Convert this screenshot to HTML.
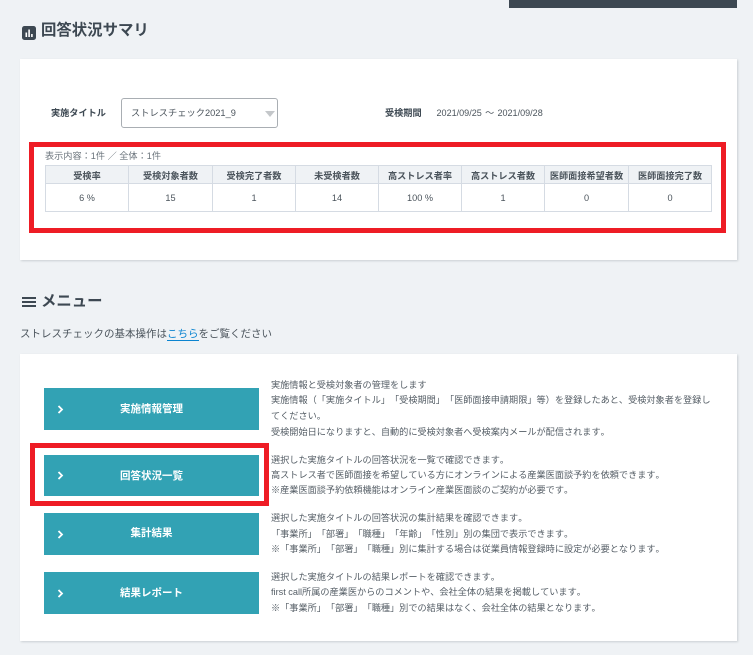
<!DOCTYPE html>
<html lang="ja">
<head>
<meta charset="utf-8">
<title>回答状況サマリ</title>
<style>
html,body{margin:0;padding:0;}
body{width:753px;height:655px;overflow:hidden;position:relative;background:#eff2f5;color:#3d4852;font-family:"Liberation Sans","Noto Sans CJK JP",sans-serif;text-spacing-trim:space-all;font-kerning:none;}
.a{position:absolute;white-space:nowrap;}
.panel{position:absolute;left:20px;width:717px;background:#fff;box-shadow:1px 1px 2px rgba(60,70,80,.2);}
.h{font-size:15.4px;font-weight:700;line-height:20px;color:#3d4852;}
.red{position:absolute;border:5px solid #ee1c25;box-sizing:border-box;}
.tbl{position:absolute;left:45px;top:165px;width:666px;height:47px;border-collapse:collapse;table-layout:fixed;font-size:9.17px;color:#4b545c;}
.tbl th,.tbl td{border:1px solid #d5dbe3;padding:0;text-align:center;font-weight:400;}
.tbl th{background:#eff2f5;font-weight:700;height:17px;color:#4b545c;}
.btn{position:absolute;left:44px;width:215px;background:#32a2b4;color:#fff;font-size:10.5px;font-weight:700;text-align:center;}
.btn svg{position:absolute;left:13px;top:50%;margin-top:-4.5px;}
.d{position:absolute;left:271px;font-size:9.17px;line-height:15px;height:15px;white-space:nowrap;color:#555e66;filter:blur(.25px);}
</style>
</head>
<body>
<div class="a" style="left:509px;top:0;width:228px;height:8px;background:#3d4852;"></div>

<svg class="a" style="left:22px;top:25.500px;" width="14" height="14" viewBox="0 0 14 14"><rect width="14" height="14" rx="2.500" fill="#3d4852"/><path d="M3.500 6.500h1.600v4.500H3.500zM6.300 3.500h1.600v7.500H6.300zM9.100 8h1.600v3H9.100z" fill="#fff"/></svg>
<div class="a h" style="left:41px;top:21px;">回答状況サマリ</div>

<div class="panel" style="top:59px;height:201px;"></div>
<div class="a" style="left:51px;top:106px;font-size:9.17px;font-weight:700;line-height:14px;">実施タイトル</div>
<div class="a" style="left:121px;top:98px;width:157px;height:30px;box-sizing:border-box;border:1px solid #a9aeb3;border-radius:3px;background:#fff;font-size:9.250px;line-height:28px;padding-left:9px;color:#4b545c;">ストレスチェック2021_9</div>
<div class="a" style="left:265px;top:111px;width:0;height:0;border-left:5px solid transparent;border-right:5px solid transparent;border-top:6px solid #c4c7ca;"></div>
<div class="a" style="left:385px;top:106px;font-size:9.17px;font-weight:700;line-height:14px;">受検期間</div>
<div class="a" style="left:436.500px;top:106px;font-size:9.05px;line-height:14px;color:#4b545c;word-spacing:.8px;">2021/09/25 ～ 2021/09/28</div>

<div class="a" style="left:45px;top:149px;font-size:9.17px;line-height:14px;color:#6b747c;">表示内容：1件 ／ 全体：1件</div>
<table class="tbl">
<colgroup><col style="width:83px"><col style="width:84px"><col style="width:83px"><col style="width:83px"><col style="width:83px"><col style="width:83px"><col style="width:84px"><col style="width:83px"></colgroup>
<tr><th>受検率</th><th>受検対象者数</th><th>受検完了者数</th><th>未受検者数</th><th>高ストレス者率</th><th>高ストレス者数</th><th>医師面接希望者数</th><th>医師面接完了数</th></tr>
<tr><td>6 %</td><td>15</td><td>1</td><td>14</td><td>100 %</td><td>1</td><td>0</td><td>0</td></tr>
</table>
<div class="red" style="left:29px;top:142px;width:697px;height:91px;"></div>

<svg class="a" style="left:22px;top:296px;" width="14" height="12" viewBox="0 0 14 12"><path d="M0 2h14M0 6h14M0 10h14" stroke="#3d4852" stroke-width="2" fill="none"/></svg>
<div class="a h" style="left:41px;top:292px;">メニュー</div>
<div class="a" style="left:20px;top:326px;font-size:10.500px;line-height:16px;color:#4b545c;">ストレスチェックの基本操作は<span style="color:#0b84d0;border-bottom:1px solid #0b84d0;">こちら</span>をご覧ください</div>

<div class="panel" style="top:354px;height:287px;"></div>

<div class="btn" style="top:388px;height:42px;line-height:42px;"><svg width="7" height="9" viewBox="0 0 7 9"><path d="M1.500 1l3.500 3.500L1.500 8" stroke="#fff" stroke-width="1.800" fill="none"/></svg>実施情報管理</div>
<div class="btn" style="top:455px;height:41px;line-height:42px;"><svg width="7" height="9" viewBox="0 0 7 9"><path d="M1.500 1l3.500 3.500L1.500 8" stroke="#fff" stroke-width="1.800" fill="none"/></svg>回答状況一覧</div>
<div class="btn" style="top:513px;height:42px;line-height:41px;"><svg width="7" height="9" viewBox="0 0 7 9"><path d="M1.500 1l3.500 3.500L1.500 8" stroke="#fff" stroke-width="1.800" fill="none"/></svg>集計結果</div>
<div class="btn" style="top:572px;height:42px;line-height:42px;"><svg width="7" height="9" viewBox="0 0 7 9"><path d="M1.500 1l3.500 3.500L1.500 8" stroke="#fff" stroke-width="1.800" fill="none"/></svg>結果レポート</div>
<div class="red" style="left:30px;top:443px;width:239px;height:63px;"></div>

<div class="d" style="top:378px;">実施情報と受検対象者の管理をします</div>
<div class="d" style="top:393px;">実施情報（「実施タイトル」「受検期間」「医師面接申請期限」等）を登録したあと、受検対象者を登録し</div>
<div class="d" style="top:409px;">てください。</div>
<div class="d" style="top:425px;">受検開始日になりますと、自動的に受検対象者へ受検案内メールが配信されます。</div>

<div class="d" style="top:453px;">選択した実施タイトルの回答状況を一覧で確認できます。</div>
<div class="d" style="top:468px;">高ストレス者で医師面接を希望している方にオンラインによる産業医面談予約を依頼できます。</div>
<div class="d" style="top:483px;">※産業医面談予約依頼機能はオンライン産業医面談のご契約が必要です。</div>

<div class="d" style="top:511px;">選択した実施タイトルの回答状況の集計結果を確認できます。</div>
<div class="d" style="top:527px;">「事業所」「部署」「職種」「年齢」「性別」別の集団で表示できます。</div>
<div class="d" style="top:542px;">※「事業所」「部署」「職種」別に集計する場合は従業員情報登録時に設定が必要となります。</div>

<div class="d" style="top:570px;">選択した実施タイトルの結果レポートを確認できます。</div>
<div class="d" style="top:585px;">first call所属の産業医からのコメントや、会社全体の結果を掲載しています。</div>
<div class="d" style="top:601px;">※「事業所」「部署」「職種」別での結果はなく、会社全体の結果となります。</div>
</body>
</html>
